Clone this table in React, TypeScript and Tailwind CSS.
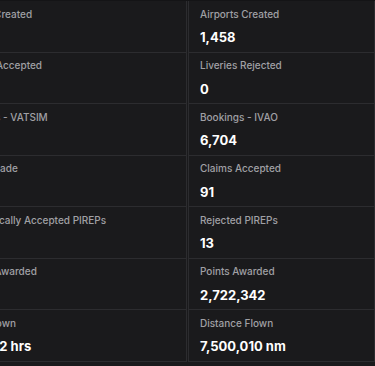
import React from "react";

type Stat = { label: string; value: string };

const rows: [Stat, Stat][] = [
  [{ label: "Aircraft Created", value: "1,204" }, { label: "Airports Created", value: "1,458" }],
  [{ label: "Liveries Accepted", value: "3,118" }, { label: "Liveries Rejected", value: "0" }],
  [{ label: "Bookings - VATSIM", value: "2,391" }, { label: "Bookings - IVAO", value: "6,704" }],
  [{ label: "Claims Made", value: "104" }, { label: "Claims Accepted", value: "91" }],
  [{ label: "Automatically Accepted PIREPs", value: "9,826" }, { label: "Rejected PIREPs", value: "13" }],
  [{ label: "Badges Awarded", value: "4,417" }, { label: "Points Awarded", value: "2,722,342" }],
  [{ label: "Hours Flown", value: "123,452 hrs" }, { label: "Distance Flown", value: "7,500,010 nm" }],
];

function Cell({ stat, className }: { stat: Stat; className: string }) {
  return (
    <div className={`flex flex-col border-b border-[#2c2c2f] pt-[5.5px] pb-[5.5px] ${className}`}>
      <div className="text-[10px] leading-[14px] font-medium text-[#a0a0a5] whitespace-nowrap">{stat.label}</div>
      <div className="mt-[7.5px] text-[13px] leading-[18px] font-bold text-white whitespace-nowrap">{stat.value}</div>
    </div>
  );
}

export default function App() {
  return (
    <div
      className="w-[375px] h-[366px] overflow-hidden bg-[#1a1a1c]"
      style={{ fontFamily: "Inter, 'Noto Sans', sans-serif" }}
    >
      <div className="-ml-[56px] grid grid-cols-[243px_188px] border-t border-[#141416]">
        {rows.map(([l, r], i) => (
          <React.Fragment key={i}>
            <Cell stat={l} className="pl-3 pr-3 border-r border-r-[#2c2c2f]" />
            <Cell stat={r} className="pl-[11px] pr-3 border-l border-l-[#2c2c2f] ml-px border-r border-r-[#2c2c2f]" />
          </React.Fragment>
        ))}
      </div>
    </div>
  );
}
